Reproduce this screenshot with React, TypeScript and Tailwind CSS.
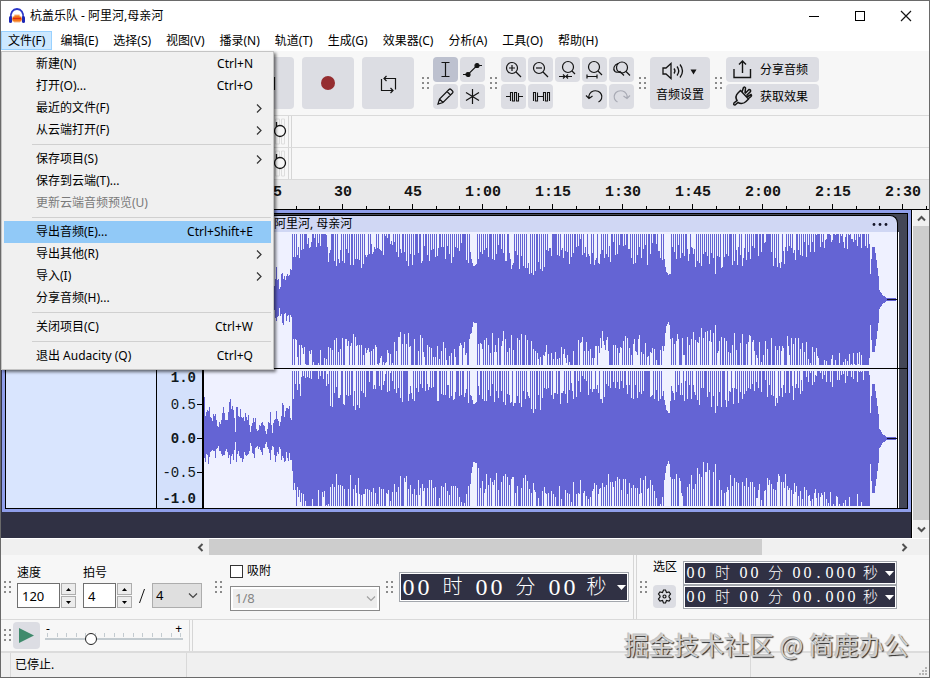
import type { ReactNode } from 'react';
import clsx from 'clsx';

type MenuEntry = {
  label: string;
  shortcut?: string;
  submenu?: boolean;
  disabled?: boolean;
  active?: boolean;
};

const MENUS = [
  '文件(F)',
  '编辑(E)',
  '选择(S)',
  '视图(V)',
  '播录(N)',
  '轨道(T)',
  '生成(G)',
  '效果器(C)',
  '分析(A)',
  '工具(O)',
  '帮助(H)'
];

const FILE_MENU: MenuEntry[][] = [
  [
    { label: '新建(N)', shortcut: 'Ctrl+N' },
    { label: '打开(O)...', shortcut: 'Ctrl+O' },
    { label: '最近的文件(F)', submenu: true },
    { label: '从云端打开(F)', submenu: true }
  ],
  [
    { label: '保存项目(S)', submenu: true },
    { label: '保存到云端(T)...' },
    { label: '更新云端音频预览(U)', disabled: true }
  ],
  [
    { label: '导出音频(E)...', shortcut: 'Ctrl+Shift+E', active: true },
    { label: '导出其他(R)', submenu: true },
    { label: '导入(I)', submenu: true },
    { label: '分享音频(H)...' }
  ],
  [{ label: '关闭项目(C)', shortcut: 'Ctrl+W' }],
  [{ label: '退出 Audacity (Q)', shortcut: 'Ctrl+Q' }]
];

const RULER = ['0', '15', '30', '45', '1:00', '1:15', '1:30', '1:45', '2:00', '2:15', '2:30'];

/* ---------- waveform ---------- */

type Key = [number, number];

const QUIET: Key[] = [
  [0, 0.55], [2, 0.32], [4, 0.45], [7, 0.3], [11, 0.36], [14, 0.2], [18, 0.42], [22, 0.3],
  [26, 0.5], [29, 0.42], [31, 0.1], [32, 0.6], [34, 0.3], [36, 0.46], [40, 0.36], [44, 0.3],
  [46, 0.12], [49, 0.4], [53, 0.15], [58, 0.28], [62, 0.1], [66, 0.38], [68, 0.12], [72, 0.5],
  [75, 0.2], [78, 0.45], [82, 0.42], [87, 0.4]
];

const LOUD_TOP: Key[] = [
  [88, 0.68], [96, 0.75], [102, 0.96], [122, 0.95], [125, 0.62], [138, 0.66], [152, 0.6],
  [166, 0.76], [180, 0.84], [192, 0.82], [196, 0.66], [216, 0.7], [245, 0.7], [262, 0.76],
  [267, 0.62], [269, 0.5], [272, 0.54], [275, 0.72], [296, 0.7], [316, 0.6], [331, 0.55],
  [346, 0.66], [366, 0.72], [378, 0.84], [386, 0.68], [396, 0.68], [416, 0.84], [432, 0.66],
  [450, 0.76], [457, 0.7], [461, 0.42], [464, 0.35], [466, 0.7], [480, 0.72], [498, 0.62],
  [509, 0.64], [512, 0.6], [536, 0.68], [556, 0.84], [569, 0.62], [596, 0.78], [616, 0.94],
  [640, 0.92], [664, 0.97]
];

const LOUD_BOTTOM: Key[] = [
  [88, 0.6], [98, 0.9], [122, 0.95], [128, 0.68], [150, 0.7], [166, 0.82], [186, 0.92],
  [194, 0.66], [214, 0.72], [236, 0.8], [262, 0.82], [267, 0.5], [269, 0.34], [272, 0.36],
  [275, 0.72], [296, 0.66], [320, 0.72], [340, 0.8], [360, 0.92], [376, 0.7], [386, 0.9],
  [396, 0.66], [416, 0.72], [440, 0.72], [456, 0.95], [461, 0.4], [464, 0.3], [466, 0.66],
  [484, 0.76], [490, 0.55], [500, 0.5], [512, 0.72], [540, 0.66], [556, 0.82], [570, 0.64],
  [600, 0.8], [620, 0.96], [664, 0.98]
];

const TAIL: Key[] = [
  [665, 0.38], [666, 0.62], [667, 0.8], [669, 0.8], [671, 0.6], [673, 0.36], [674, 0.14],
  [677, 0.06], [681, 0.02], [692, 0.005]
];

// Single columns where the music nearly stops.
const DIPS = [464, 510, 665];

function noise(n: number) {
  const s = Math.sin(n * 12.9898) * 43758.5453;
  return s - Math.floor(s);
}

function sample(keys: Key[], x: number) {
  for (let i = 1; i < keys.length; i++) {
    const [x0, y0] = keys[i - 1];
    const [x1, y1] = keys[i];
    if (x <= x1) return y0 + ((y1 - y0) * Math.max(0, x - x0)) / (x1 - x0);
  }
  return keys[keys.length - 1][1];
}

function level(x: number, keys: Key[], seed: number, gain: number) {
  if (x < 88) return sample(QUIET, x) * gain * (0.65 + noise(x + seed) * 0.55);
  if (DIPS.includes(x)) return 0.38;
  if (x > 664) return sample(TAIL, x);
  const base = sample(keys, x);
  const inBreak = (x > 266 && x < 273) || (x > 459 && x < 465);
  if (inBreak) return base;
  const peak = (x + Math.floor(x / 37)) % 2 === 0 ? noise(x * 3 + seed) < 0.84 : noise(x * 7 + seed) < 0.08;
  if (peak) return 1;
  return Math.min(1, base + (noise(x * 5 + seed) - 0.58) * 0.32);
}

function wavePath(mid: number, amp: number, seed: number) {
  let d = '';
  for (let x = 0; x < 692; x++) {
    const up = Math.round(level(x, LOUD_TOP, seed, 1) * amp);
    const down = Math.round(level(x, LOUD_BOTTOM, seed + 40, 0.72) * amp);
    d += `M${x} ${mid - up}h1V${mid + down + 1}h-1z`;
  }
  return d;
}

function Waveform({ height, mid, amp, seed }: { height: number; mid: number; amp: number; seed: number }) {
  return (
    <svg
      className="block w-full"
      height={height}
      viewBox={`0 0 692 ${height}`}
      preserveAspectRatio="none"
      shapeRendering="crispEdges"
      aria-hidden="true"
    >
      <path d={wavePath(mid, amp, seed)} fill="#6464d4" />
      <path d={`M682 ${mid}h10v1h-10z`} fill="#10102c" />
    </svg>
  );
}

/* ---------- small parts ---------- */

function Icon({ size = 25, children }: { size?: number; children: ReactNode }) {
  return (
    <svg
      width={size}
      height={size}
      viewBox={`0 0 ${size} ${size}`}
      fill="none"
      stroke="#141414"
      strokeWidth="1.2"
      className="shrink-0"
      aria-hidden="true"
    >
      {children}
    </svg>
  );
}

function Grip() {
  return (
    <svg width="8" height="13" viewBox="0 0 8 13" fill="#8b8b8b" className="shrink-0" shapeRendering="crispEdges" aria-hidden="true">
      {[0, 5, 10].map((y) => (
        <g key={y}>
          <rect x="0" y={y} width="2" height="2" />
          <rect x="5" y={y} width="2" height="2" />
        </g>
      ))}
    </svg>
  );
}

function BigButton({ label, children }: { label: string; children: ReactNode }) {
  return (
    <button aria-label={label} className="flex size-[52px] shrink-0 items-center justify-center rounded-sm bg-[#dcdde3]">
      {children}
    </button>
  );
}

function Tool({ label, active, children }: { label: string; active?: boolean; children: ReactNode }) {
  return (
    <button
      aria-label={label}
      className={clsx('flex size-[25px] items-center justify-center rounded-sm', active ? 'bg-[#bdc1cf]' : 'bg-[#dcdde3]')}
    >
      <Icon>{children}</Icon>
    </button>
  );
}

function Lens({ cx = 11 }: { cx?: number }) {
  return (
    <>
      <circle cx={cx} cy="11" r="5.5" />
      <path d={`M${cx + 4} 15l5 5`} />
    </>
  );
}

function FileMenu() {
  return (
    <div
      role="menu"
      className="absolute top-full left-0 z-20 w-[273px] border border-[#c4c4c4] bg-[#f0f0f0] px-[2px] pt-px pb-[2px] shadow-[2px_2px_3px_rgba(0,0,0,0.55)]"
    >
      {FILE_MENU.map((group, i) => (
        <div key={i}>
          {i > 0 && (
            <div className="flex h-[7px] items-center pl-7">
              <hr className="w-full border-[#d0d0d0]" />
            </div>
          )}
          {group.map((item) => (
            <button
              key={item.label}
              role="menuitem"
              disabled={item.disabled}
              className={clsx(
                'flex h-[22px] w-full items-center pr-[18px] pl-8 text-left',
                item.active && 'bg-[#91c9f7]',
                item.disabled ? 'text-[#7a7a7a]' : 'text-black'
              )}
            >
              <span className="flex-1">{item.label}</span>
              {item.shortcut && <span>{item.shortcut}</span>}
              {item.submenu && (
                <svg width="6" height="9" viewBox="0 0 6 9" className="-mr-[9px]" fill="none" stroke="#333" strokeWidth="1.2" aria-hidden="true">
                  <path d="M1 .5l4 4-4 4" />
                </svg>
              )}
            </button>
          ))}
        </div>
      ))}
    </div>
  );
}

function TitleBar() {
  return (
    <header className="flex h-[30px] items-center bg-white pl-2">
      <svg width="16" height="16" viewBox="0 0 16 16" aria-hidden="true">
        <path d="M2 10C1 4.500 4 1 8 1s7 3.500 6 9" fill="none" stroke="#2a35c8" strokeWidth="1.800" />
        <path d="M3 11l1-3 1 1 1-3 1 2 1-2 1 2 1-2 1 3 1-1 1 3-1 3-1-1-1 2-1-2-1 2-1-2-1 2-1-2-1 1z" fill="#f47a1c" />
        <path d="M4 10.500h8" stroke="#e02c10" strokeWidth="1.500" />
        <rect x="0" y="8" width="3" height="7" rx="1.500" fill="#1d27b5" />
        <rect x="13" y="8" width="3" height="7" rx="1.500" fill="#1d27b5" />
      </svg>
      <h1 className="ml-[5px] flex-1 text-xs">杭盖乐队 - 阿里河,母亲河</h1>
      <button aria-label="最小化" className="flex h-full w-[46px] items-center justify-center">
        <span className="w-2.5 border-t border-black" />
      </button>
      <button aria-label="最大化" className="flex h-full w-[46px] items-center justify-center">
        <span className="size-2.5 border border-black" />
      </button>
      <button aria-label="关闭" className="flex h-full w-[46px] items-center justify-center">
        <Icon size={12}>
          <path d="M1 1l10 10M11 1L1 11" />
        </Icon>
      </button>
    </header>
  );
}

function MenuBar() {
  return (
    <nav className="relative flex h-5 gap-px bg-white">
      {MENUS.map((menu, i) => (
        <button
          key={menu}
          className={clsx('flex h-[19px] items-center border px-[6px] whitespace-nowrap', i === 0 ? 'border-[#99d1ff] bg-[#cce8ff]' : 'border-transparent')}
        >
          {menu}
        </button>
      ))}
      <FileMenu />
    </nav>
  );
}

function Toolbar() {
  return (
    <section className="flex h-[65px] items-center border-b border-[#dadada] pl-[61px]">
      <div className="flex gap-2">
        <BigButton label="播放">
          <Icon><path d="M7 4l13 8-13 8z" fill="#3f8a6c" stroke="none" /></Icon>
        </BigButton>
        <BigButton label="停止">
          <Icon><path d="M6 6h13v13H6z" fill="#141414" stroke="none" /></Icon>
        </BigButton>
        <BigButton label="跳至开头">
          <Icon><path d="M6 6v13M19 6v13l-10-6z" /></Icon>
        </BigButton>
        <BigButton label="跳至结尾">
          <Icon><path d="M18.500 6v13M6 6v13l10-6z" /></Icon>
        </BigButton>
        <BigButton label="录制">
          <span className="size-3.5 rounded-full bg-[#952d30]" />
        </BigButton>
        <BigButton label="循环">
          <Icon>
            <path d="M8 7.500h11.500v11M5.500 8v11.500H17M10.500 5L8 7.500l2.500 2.500M14.500 17l2.500 2.500-2.500 2.500" />
          </Icon>
        </BigButton>
      </div>

      <div className="flex w-[19px] justify-center pl-1"><Grip /></div>
      <div className="grid grid-cols-[repeat(2,25px)] gap-[2px]">
        <Tool label="选择工具" active>
          <path d="M8.500 5.500h8M8.500 19.500h8M12.500 5.500v14" />
        </Tool>
        <Tool label="包络工具">
          <path d="M3 17.500h5L17 8.500h5" />
          <circle cx="8" cy="17.500" r="2" fill="#141414" />
          <circle cx="17" cy="8.500" r="2" fill="#141414" />
        </Tool>
        <Tool label="绘制工具">
          <path d="M5 20l1.500-5L16 5.500q1-1 2 0l1.500 1.500q1 1 0 2L10 18.500zM14 7.500l3.500 3.500M6.500 15l3.500 3.500" />
        </Tool>
        <Tool label="多功能工具">
          <path d="M12.500 5v15M6 8.500l13 8M19 8.500l-13 8" />
        </Tool>
      </div>

      <div className="flex w-4 justify-center pl-[2px]"><Grip /></div>
      <div className="grid grid-cols-[repeat(5,25px)] gap-[2px]">
        <Tool label="放大"><Lens /><path d="M8 11h6M11 8v6" /></Tool>
        <Tool label="缩小"><Lens /><path d="M8 11h6" /></Tool>
        <Tool label="缩放至选区">
          <circle cx="13" cy="10" r="5.5" />
          <path d="M17 14l3 3M4 19.500h6M17 19.500h-6M8 17.500l2 2-2 2M13 17.500l-2 2 2 2" />
        </Tool>
        <Tool label="缩放至项目">
          <circle cx="12" cy="10" r="5.5" />
          <path d="M16 14l4 4M5 19.500h10M5 17.500v4M15 17.500v4" />
        </Tool>
        <Tool label="缩放切换">
          <circle cx="13" cy="10.500" r="5.500" />
          <path d="M17 14.500l4 4M9 6.500C5 8 3.500 12 6 14.500q2.500 1.500 5 0l4 4" />
        </Tool>
        <Tool label="修剪">
          <path d="M5 12.500h4M17.500 12.500H22M9.500 17V8.500h2V17h2V8.500h2V17h2V9" strokeWidth="1.100" />
        </Tool>
        <Tool label="静音">
          <path d="M5.500 17V8.500h2V17h2V8.500M9.500 12.500h6M15.500 17V8.500h2V17h2V8.500h2V17" strokeWidth="1.100" />
        </Tool>
        <span />
        <Tool label="撤销">
          <path d="M7 14a6.500 6 0 1 1 9.500 4M4 11.500l3 3 3.500-2.500" />
        </Tool>
        <Tool label="重做">
          <path d="M18 14a6.500 6 0 1 0-9.500 4M21 11.500l-3 3-3.500-2.500" stroke="#a9abb5" />
        </Tool>
      </div>

      <div className="flex w-4 justify-center pl-px"><Grip /></div>
      <button className="flex h-[52px] w-[60px] flex-col items-center justify-between rounded-sm bg-[#dcdde3] pt-1 pb-1.5">
        <svg width="38" height="20" viewBox="0 0 38 20" fill="none" stroke="#141414" strokeWidth="1.300" aria-hidden="true">
          <path d="M2 7h3l5-4.500v15L5 13H2zM13 7.500q2 2.500 0 5M16 5.500q3.500 4.500 0 9M19 3.500q5 6.500 0 13" />
          <path d="M29.500 8.500h6l-3 5z" fill="#141414" stroke="none" />
        </svg>
        <span className="leading-4">音频设置</span>
      </button>

      <div className="flex w-4 justify-center pl-px"><Grip /></div>
      <div className="flex flex-col gap-[2px]">
        <button className="flex h-[25px] w-[93px] items-center gap-[5px] rounded-sm bg-[#dcdde3] pl-1">
          <Icon><path d="M4 12v8.500h16.500V12M12.500 16V4M9 7.500L12.500 4 16 7.500" strokeWidth="1.400" /></Icon>
          分享音频
        </button>
        <button className="flex h-[25px] w-[93px] items-center gap-[5px] rounded-sm bg-[#dcdde3] pl-1">
          <Icon>
            <path
              d="M10.500 6.500L8 9c-2 2-2.500 5-1 7.500l-3 2.500q-1 2 1 2l3-2.500c2.500 1.500 6 1 8-1l2.500-2.500zM12 8l1.500-4.500q1.500-1 2 .5L15 9M15 9.500l4-4q2 0 1.500 2l-4 4M17 13l4-2.500q1 1 0 2L18 15"
              strokeWidth="1.500"
            />
          </Icon>
          获取效果
        </button>
      </div>
    </section>
  );
}

function MeterRow({ label }: { label: string }) {
  return (
    <section aria-label={label} className="flex h-8 border-b border-[#dadada] pl-[261px]">
      <svg width="26" height="31" viewBox="0 0 26 31" fill="none" aria-hidden="true">
        <path d="M13.500 3v25h4V3zM19.500 3v25h3V3z" stroke="#dedede" />
        <path d="M14.500 6v5" stroke="#141414" strokeWidth="1.300" />
        <circle cx="18" cy="15" r="5.500" fill="#f7f7f7" stroke="#141414" strokeWidth="1.300" />
      </svg>
      <span className="w-1 border-x border-[#d6d6d6]" />
    </section>
  );
}

function Ruler() {
  return (
    <div className="flex h-[30px] overflow-hidden border-b border-black bg-[#e9e9ea] pl-[167px]">
      {RULER.map((mark) => (
        <div key={mark} className="flex w-[70px] shrink-0 flex-col justify-between">
          <span className="pt-[3px] text-center font-['Liberation_Mono','Noto_Sans_CJK_SC',monospace] text-[15px] leading-5 font-bold text-[#141414]">
            {mark}
          </span>
          <span className="grid grid-cols-3 items-end justify-items-center">
            <i className="h-[3px] w-px bg-black" />
            <i className="h-[5px] w-px bg-black" />
            <i className="h-[3px] w-px bg-black" />
          </span>
        </div>
      ))}
    </div>
  );
}

function ScaleMark({ value, bold, tick }: { value: string; bold?: boolean; tick?: boolean }) {
  return (
    <div className={clsx('flex h-[18px] items-center justify-end', bold && 'font-bold')}>
      {value}
      <span className={clsx('ml-px w-[5px]', tick && 'border-t border-black')} />
    </div>
  );
}

function Scale() {
  return (
    <div className="flex h-[139px] flex-col justify-between">
      <ScaleMark value="1.0" bold />
      <div className="flex flex-col gap-4">
        <ScaleMark value="0.5" tick />
        <ScaleMark value="0.0" bold tick />
        <ScaleMark value="-0.5" tick />
      </div>
      <ScaleMark value="-1.0" bold />
    </div>
  );
}

function Chevron({ className }: { className?: string }) {
  return (
    <svg width="9" height="7" viewBox="0 0 9 7" fill="none" stroke="#505050" strokeWidth="2" className={className} aria-hidden="true">
      <path d="M1 5.500L4.500 2 8 5.500" />
    </svg>
  );
}

function TrackArea() {
  return (
    <main className="flex flex-1">
      <div className="min-w-0 flex-1 border-r border-black bg-[#303144] pl-px">
        <div className="border-[3px] border-[#8f9eea]">
          <div className="flex border border-black bg-[#434656]">
            <div className="w-[150px] shrink-0 bg-[#d9e5fe]" />
            <div className="flex w-[48px] shrink-0 flex-col justify-end border-r-2 border-l border-black bg-[#d3e0fb] font-['Liberation_Mono',monospace] text-sm text-[#101820]">
              <Scale />
            </div>
            <div className="min-w-0 flex-1 pt-px">
              <div className="mr-[9px] flex h-[17px] items-center justify-between rounded-tr-lg border-t border-r border-black bg-[#d0d7f4] pr-2 pl-[70px]">
                <span>阿里河, 母亲河</span>
                <svg width="17" height="3" viewBox="0 0 17 3" fill="#141428" aria-hidden="true">
                  <circle cx="2" cy="1.500" r="1.400" />
                  <circle cx="8" cy="1.500" r="1.400" />
                  <circle cx="14" cy="1.500" r="1.400" />
                </svg>
              </div>
              <div className="border-b border-black">
                <div className="mr-[8px] border-r border-white">
                  <div className="border-r border-black bg-[#eff1ff]">
                    <Waveform height={136} mid={67} amp={65} seed={3} />
                  </div>
                </div>
              </div>
              <div className="mr-[8px] border-r border-white">
                <div className="border-r border-black bg-[#eff1ff]">
                  <Waveform height={139} mid={69} amp={67} seed={11} />
                </div>
              </div>
            </div>
          </div>
        </div>
      </div>
      <div className="flex w-[17px] flex-col items-center border-l border-white bg-[#f0f0f0]">
        <div className="flex h-4 items-center"><Chevron /></div>
        <div className="w-full flex-1 bg-[#cdcdcd]" />
        <div className="flex h-[18px] items-center"><Chevron className="rotate-180" /></div>
      </div>
    </main>
  );
}

function HorizontalScroll() {
  return (
    <div className="flex h-[17px] items-center border-t border-white bg-[#f0f0f0] pr-5 pl-[195px]">
      <Chevron className="-rotate-90" />
      <div className="ml-1 flex h-full flex-1">
        <div className="w-4/5 bg-[#cdcdcd]" />
      </div>
      <Chevron className="rotate-90" />
    </div>
  );
}

function Spinner({ label, value, width }: { label: string; value: string; width: string }) {
  return (
    <div className="flex flex-col">
      <label htmlFor={label} className="mb-[2px] leading-4">{label}</label>
      <div className="flex h-[25px] gap-px">
        <input
          id={label}
          defaultValue={value}
          className={clsx('h-full border border-[#6f6f6f] bg-white pl-1 text-[13px]', width)}
        />
        <div className="flex w-[15px] flex-col gap-px">
          <button aria-label={`${label}增加`} className="flex flex-1 items-center justify-center border border-[#adadad] bg-[#ececec]">
            <svg width="5" height="3" viewBox="0 0 5 3" aria-hidden="true"><path d="M0 3L2.500 0 5 3z" /></svg>
          </button>
          <button aria-label={`${label}减少`} className="flex flex-1 items-center justify-center border border-[#adadad] bg-[#ececec]">
            <svg width="5" height="3" viewBox="0 0 5 3" aria-hidden="true"><path d="M0 0h5L2.500 3z" /></svg>
          </button>
        </div>
      </div>
    </div>
  );
}

function DropArrow({ className }: { className: string }) {
  return (
    <svg width="10" height="6" viewBox="0 0 10 6" fill="none" strokeWidth="1.200" className={clsx('pointer-events-none absolute top-1/2 -mt-[3px]', className)} aria-hidden="true">
      <path d="M1 .5L5 4.500 9 .5" />
    </svg>
  );
}

// Every digit of a time readout sits in a cell of its own.
function TimeReadout({ parts, large }: { parts: [string, string][]; large?: boolean }) {
  return (
    <div className={clsx('border border-[#a3a7ad] bg-white p-px', large ? 'w-[230px]' : 'w-[214px]')}>
      <div
        className={clsx(
          "flex items-center bg-[#303144] font-['Liberation_Serif','Noto_Sans_CJK_SC',serif] text-white",
          large ? 'h-[26px] text-2xl' : 'h-[20px] text-base'
        )}
      >
        {parts.map(([digits, unit], i) => (
          <span key={i} className="flex items-center">
            {digits.split('').map((digit, j) => (
              <span key={j} className={clsx('text-center', large ? 'w-[15px]' : 'w-[11px]')}>{digit}</span>
            ))}
            <span
              className={clsx(
                'text-center font-light',
                large ? 'text-xl' : 'text-[15px]',
                large && (i === 2 ? 'w-[39px]' : 'w-[43px]'),
                !large && (i === 2 ? 'w-[27px]' : 'w-[31px]')
              )}
            >
              {unit}
            </span>
          </span>
        ))}
        <button aria-label="时间格式" className="mr-px ml-auto shrink-0">
          <svg width="9" height="5" viewBox="0 0 9 5" fill="#fff" aria-hidden="true"><path d="M0 0h9L4.500 5z" /></svg>
        </button>
      </div>
    </div>
  );
}

function BottomBar() {
  return (
    <section className="flex h-[65px] border-b border-[#dadada]">
      <div className="flex items-center pl-[3px]"><Grip /></div>
      <div className="ml-[5px] flex items-end gap-[7px] pb-[11px]">
        <Spinner label="速度" value="120" width="w-[43px]" />
        <Spinner label="拍号" value="4" width="w-[33px]" />
        <svg width="6" height="14" viewBox="0 0 6 14" stroke="#141414" className="mb-[5px]" aria-hidden="true">
          <path d="M5.500 0L.5 14" />
        </svg>
        <div className="relative">
          <select aria-label="拍号分母" className="block h-[25px] w-[50px] appearance-none border border-[#adadad] bg-[#dfdfdf] pl-[3px] text-[13px]">
            <option>4</option>
          </select>
          <DropArrow className="right-1 stroke-[#444]" />
        </div>
      </div>

      <div className="flex w-7 items-center justify-center pl-1.5"><Grip /></div>
      <div className="flex flex-1 flex-col justify-between pt-2 pb-2">
        <label className="flex items-center gap-1 leading-4">
          <input type="checkbox" className="size-[13px] appearance-none border border-[#333] bg-white" />
          吸附
        </label>
        <div className="relative">
          <select
            aria-label="吸附间隔"
            disabled
            className="block h-[25px] w-full appearance-none border border-[#8a8a8a] bg-[#ededed] pl-1 text-[13px] text-[#858585] ring-2 ring-white ring-inset"
          >
            <option>1/8</option>
          </select>
          <DropArrow className="right-1 stroke-[#a0a0a0]" />
        </div>
      </div>

      <div className="flex w-[19px] items-center justify-center pl-px"><Grip /></div>
      <div className="flex items-center pr-1">
        <TimeReadout large parts={[['00', '时'], ['00', '分'], ['00', '秒']]} />
      </div>
      <span className="w-1 border-x border-[#d6d6d6]" />

      <div className="flex w-[14px] items-center justify-center"><Grip /></div>
      <div className="flex w-8 flex-col items-start justify-between pt-1 pb-[11px] pl-[2px]">
        <span className="leading-4 whitespace-nowrap">选区</span>
        <button aria-label="选区设置" className="flex size-[23px] items-center justify-center rounded-sm bg-[#dcdde3]">
          <Icon size={15}>
            <path d="M5.500 3.500L6.500 1h2l1 2.500 2.500-.5 1.500 2-1.500 2v1l1.500 2-1.500 2-2.500-.5-1 2.500h-2l-1-2.500-2.500.5-1.500-2L3 8V7L1.500 5 3 3z" />
            <circle cx="7.500" cy="7.500" r="1.500" />
          </Icon>
        </button>
      </div>
      <div className="mr-8 pt-[6px]">
        <TimeReadout parts={[['00', '时'], ['00', '分'], ['00.000', '秒']]} />
        <TimeReadout parts={[['00', '时'], ['00', '分'], ['00.000', '秒']]} />
      </div>
    </section>
  );
}

function SpeedBar() {
  return (
    <section className="flex h-[33px] items-center border-b-2 border-[#dcdcdc] pl-[3px]">
      <Grip />
      <button aria-label="以指定速度播放" className="ml-px flex size-[27px] items-center justify-center rounded-sm bg-[#dcdde3]">
        <svg width="15" height="15" viewBox="0 0 15 15" aria-hidden="true"><path d="M0 0l15 7.500L0 15z" fill="#3f8a6c" /></svg>
      </button>
      <div className="ml-[5px] flex h-[25px] w-[138px] flex-col">
        <div className="flex h-2.5 justify-between px-px leading-3" aria-hidden="true">
          <span>-</span>
          <span>+</span>
        </div>
        <div className="flex h-1 justify-between px-[2px]">
          {Array.from({ length: 15 }, (_, i) => (
            <i key={i} className="w-px bg-[#c3cbd0]" />
          ))}
        </div>
        <input
          type="range"
          aria-label="播放速度"
          defaultValue={32}
          className="-mt-[4px] h-3 w-full appearance-none bg-[linear-gradient(#c3cbd0,#c3cbd0)] bg-[length:100%_2px] bg-center bg-no-repeat [&::-webkit-slider-thumb]:size-3 [&::-webkit-slider-thumb]:appearance-none [&::-webkit-slider-thumb]:rounded-full [&::-webkit-slider-thumb]:border [&::-webkit-slider-thumb]:border-[#222] [&::-webkit-slider-thumb]:bg-white"
        />
      </div>
      <span className="ml-[6px] h-full w-1 border-x border-[#d6d6d6]" />
    </section>
  );
}

function StatusBar() {
  return (
    <footer className="flex h-6 items-center bg-[#f0f0f0]">
      <span className="h-full w-[10px] border-r border-[#d9d9d9]" />
      <span className="flex h-full w-[176px] items-center border-r border-[#d9d9d9] pl-1">已停止.</span>
      <span className="h-full flex-1 border-r border-[#d9d9d9]" />
      <span className="flex h-full w-[178px] items-end justify-end p-px">
        <svg width="9" height="9" viewBox="0 0 9 9" fill="#b5b5b5" aria-hidden="true">
          <path d="M6 0h2v2H6zM3 3h2v2H3zM6 3h2v2H6zM0 6h2v2H0zM3 6h2v2H3zM6 6h2v2H6z" />
        </svg>
      </span>
    </footer>
  );
}

export default function App() {
  return (
    <div className="relative flex min-h-screen flex-col overflow-hidden border border-[#6a6a6a] bg-[#f7f7f7] font-['Noto_Sans','Noto_Sans_CJK_SC',sans-serif] text-xs text-black">
      <TitleBar />
      <MenuBar />
      <Toolbar />
      <MeterRow label="录制电平" />
      <MeterRow label="播放电平" />
      <Ruler />
      <TrackArea />
      <HorizontalScroll />
      <BottomBar />
      <SpeedBar />
      <StatusBar />
      <p className="pointer-events-none absolute right-5 bottom-[13px] font-['Noto_Sans_CJK_SC',sans-serif] text-[25px] leading-10 text-[#cfcfcf] [text-shadow:1px_1px_1px_#2b2b2b,-1px_-1px_0_#c4c4c4]">
        掘金技术社区 @ 简鹿办公
      </p>
    </div>
  );
}
